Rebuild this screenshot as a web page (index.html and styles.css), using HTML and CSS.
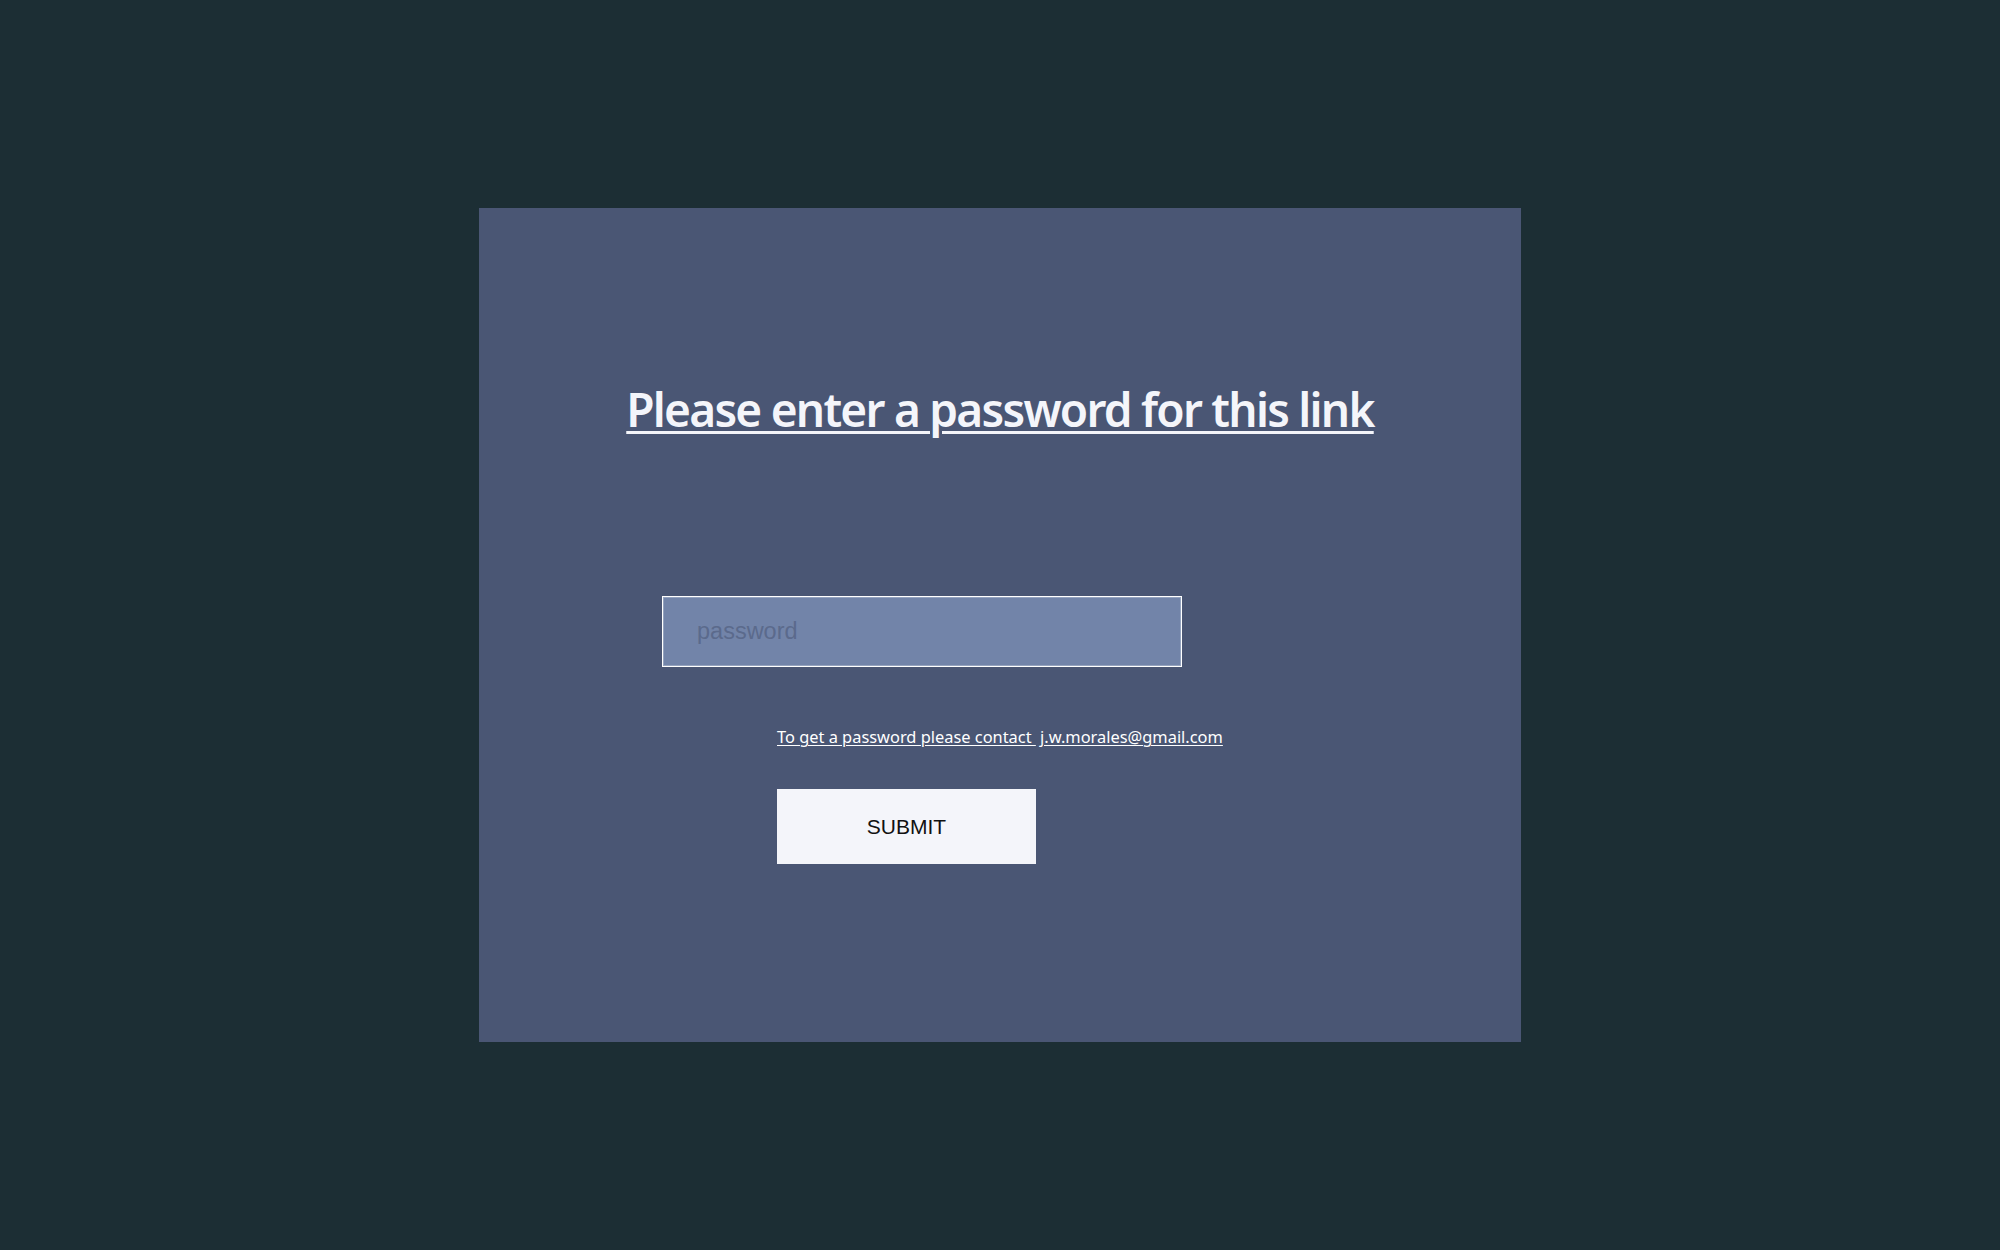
FILE: index.html
```html
<!DOCTYPE html>
<html lang="en">
<head>
  <meta charset="UTF-8">
  <title>Protected link</title>
  <link rel="stylesheet" href="styles.css">
</head>

<body>
  <main class="card">
    <h1 class="title">Please enter a password for this link</h1>

    <form class="pw-form" onsubmit="return false">
      <input class="pw-input" type="password" placeholder="password">

      <p class="hint"><span class="hint-text">To get a password please contact </span>&nbsp;<a href="mailto:j.w.morales@gmail.com">j.w.morales@gmail.com</a></p>

      <button class="submit-btn" type="submit">SUBMIT</button>
    </form>
  </main>
</body>
</html>
```

FILE: styles.css
```css
html, body {
  margin: 0;
  height: 100%;
}

body {
  background: #1c2e34;
  font-family: "Noto Sans", "Open Sans", sans-serif;
  display: flex;
  align-items: center;
  justify-content: center;
}

.card {
  width: 1042px;
  height: 834px;
  box-sizing: border-box;
  background: #4a5674;
  padding-top: 173px;
  display: flex;
  flex-direction: column;
}

.title {
  margin: 0;
  text-align: center;
  color: #f4f5fa;
  font-size: 46px;
  font-weight: 600;
  line-height: 56px;
  letter-spacing: -1.75px;
  text-decoration: underline;
  text-decoration-thickness: 3px;
  text-underline-offset: 4px;
}

.pw-form {
  display: flex;
  flex-direction: column;
  align-items: flex-start;
  margin: 159px 0 0 183px;
}

.pw-input {
  width: 520px;
  height: 71px;
  box-sizing: border-box;
  background: #7284a9;
  border: 1px solid #ffffff;
  box-shadow: inset 0 0 0 1px rgba(255, 255, 255, 0.25);
  padding: 0 34px;
  font-family: "Liberation Sans", Arial, sans-serif;
  font-size: 23.5px;
  color: #2c3550;
  outline: none;
}

.pw-input::placeholder {
  color: #5b6a8c;
}

.hint {
  margin: 60px 0 0 115px;
  font-size: 16.4px;
  line-height: 20px;
  color: #ffffff;
  white-space: nowrap;
}

.hint-text,
.hint a {
  color: #ffffff;
  text-decoration: underline;
  text-decoration-thickness: 1px;
  text-underline-offset: 2px;
}

.submit-btn {
  margin: 42px 0 0 115px;
  width: 259px;
  height: 75px;
  border: none;
  background: #f4f5fa;
  color: #111111;
  font-family: "Liberation Sans", Arial, sans-serif;
  font-size: 21px;
  cursor: pointer;
}

.submit-btn:hover {
  background: #e6e8f0;
}
```
